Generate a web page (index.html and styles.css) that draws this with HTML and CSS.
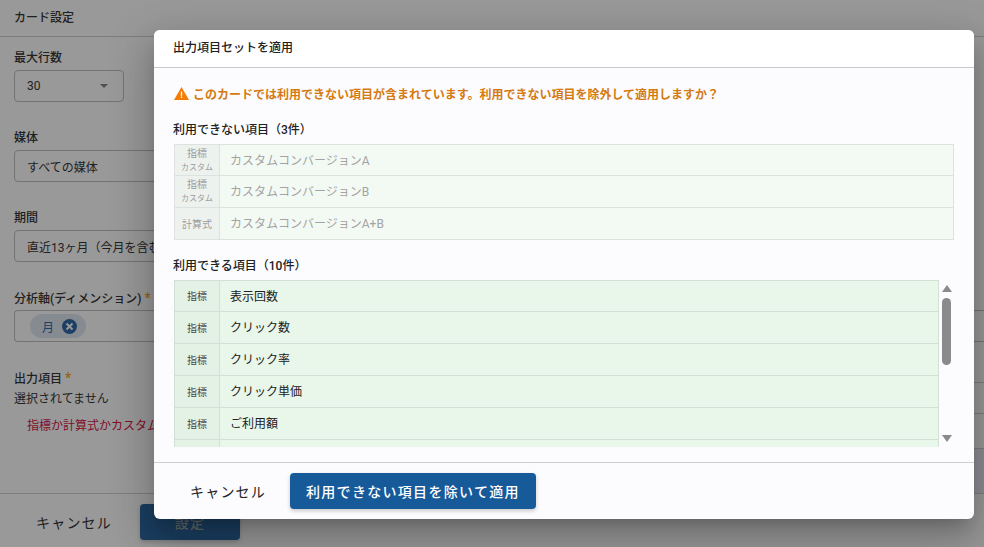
FILE: index.html
```html
<!DOCTYPE html>
<html lang="ja">
<head>
    <meta charset="UTF-8">
    <meta name="viewport" content="width=device-width, initial-scale=1.0">
    <title>カード設定</title>
    <link rel="stylesheet" href="styles.css">
</head>
<body>
    <!-- Card settings behind the dialog -->
    <div class="settings">
        <div class="settings-title">カード設定</div>
        <div class="settings-body">
            <div class="field">
                <div class="field-label">最大行数</div>
                <div class="select select-small">
                    <span>30</span>
                    <span class="caret"></span>
                </div>
            </div>
            <div class="field">
                <div class="field-label">媒体</div>
                <div class="select">すべての媒体</div>
            </div>
            <div class="field">
                <div class="field-label">期間</div>
                <div class="select">直近13ヶ月（今月を含む）</div>
            </div>
            <div class="field">
                <div class="field-label">分析軸(ディメンション)<span class="required">*</span></div>
                <div class="select select-wide">
                    <span class="chip">月
                        <svg class="chip-close" viewBox="0 0 16 16">
                            <circle cx="8" cy="8" r="8" fill="#1a5a9c"/>
                            <path d="M4.8 4.8l6.4 6.4M11.2 4.8l-6.4 6.4" stroke="#fff" stroke-width="2" fill="none"/>
                        </svg>
                    </span>
                </div>
            </div>
            <div class="output-field">
                <div class="output-left">
                    <div class="field-label">出力項目<span class="required">*</span></div>
                    <div class="output-empty">選択されてません</div>
                    <div class="output-error">指標か計算式かカスタム</div>
                </div>
                <div class="output-right">
                    <div class="side-row"></div>
                    <div class="side-row side-row-mid"></div>
                    <div class="side-row side-row-last"></div>
                </div>
            </div>
        </div>
        <div class="settings-footer">
            <button class="button-text">キャンセル</button>
            <button class="button-primary button-wide">設定</button>
        </div>
    </div>

    <div class="scrim"></div>

    <!-- Dialog -->
    <div class="dialog">
        <div class="dialog-title">出力項目セットを適用</div>
        <div class="dialog-body">
            <div class="warning">
                <svg class="warning-icon" viewBox="0 0 15 13">
                    <path d="M7.5 0L15 13H0Z" fill="#f57c00"/>
                    <path d="M6.8 4.5h1.4v4.2H6.8zM6.8 9.6h1.4v1.5H6.8z" fill="#fff"/>
                </svg>
                <span>このカードでは利用できない項目が含まれています。利用できない項目を除外して適用しますか？</span>
            </div>

            <div class="list-heading">利用できない項目（3件）</div>
            <div class="item-table item-table-disabled">
                <div class="item-row">
                    <div class="item-type">指標<small>カスタム</small></div>
                    <div class="item-name">カスタムコンバージョンA</div>
                </div>
                <div class="item-row">
                    <div class="item-type">指標<small>カスタム</small></div>
                    <div class="item-name">カスタムコンバージョンB</div>
                </div>
                <div class="item-row">
                    <div class="item-type">計算式</div>
                    <div class="item-name">カスタムコンバージョンA+B</div>
                </div>
            </div>

            <div class="list-heading">利用できる項目（10件）</div>
            <div class="scroll-box">
                <div class="item-table item-table-enabled">
                    <div class="item-row">
                        <div class="item-type">指標</div>
                        <div class="item-name">表示回数</div>
                    </div>
                    <div class="item-row">
                        <div class="item-type">指標</div>
                        <div class="item-name">クリック数</div>
                    </div>
                    <div class="item-row">
                        <div class="item-type">指標</div>
                        <div class="item-name">クリック率</div>
                    </div>
                    <div class="item-row">
                        <div class="item-type">指標</div>
                        <div class="item-name">クリック単価</div>
                    </div>
                    <div class="item-row">
                        <div class="item-type">指標</div>
                        <div class="item-name">ご利用額</div>
                    </div>
                    <div class="item-row">
                        <div class="item-type"></div>
                        <div class="item-name"></div>
                    </div>
                </div>
                <div class="scrollbar">
                    <span class="arrow-up"></span>
                    <span class="scroll-thumb"></span>
                    <span class="arrow-down"></span>
                </div>
            </div>
        </div>
        <div class="dialog-footer">
            <button class="button-text">キャンセル</button>
            <button class="button-primary">利用できない項目を除いて適用</button>
        </div>
    </div>
</body>
</html>
```

FILE: styles.css
```css
html, body {
    height: 100%;
}
body {
    margin: 0;
    overflow: hidden;
    background: #fff;
    color: #212121;
    font-family: 'Roboto', 'Noto Sans CJK JP', sans-serif;
    font-size: 12px;
}
button {
    font-family: inherit;
    border: none;
    cursor: pointer;
}

/* Settings panel */
.settings {
    height: 547px;
    display: flex;
    flex-direction: column;
}
.settings-title {
    height: 36px;
    padding-left: 14px;
    line-height: 36px;
    font-size: 12px;
    font-weight: 500;
    border-bottom: 1px solid #ccc;
}
.settings-body {
    flex: 1;
    padding: 12px 0 0 14px;
}
.field {
    height: 80px;
}
.field-label {
    height: 18px;
    line-height: 18px;
    font-size: 12px;
    font-weight: 500;
}
.required {
    color: #f59b00;
    margin-left: 3px;
    font-size: 14px;
}
.select {
    height: 30px;
    margin-top: 3px;
    width: 600px;
    padding: 0 12px;
    display: flex;
    align-items: center;
    border: 1px solid #bbb;
    border-radius: 4px;
    font-size: 12px;
}
.select-small {
    width: 84px;
    justify-content: space-between;
}
.select-wide {
    width: auto;
    border-right: none;
    border-radius: 4px 0 0 4px;
}
.caret {
    width: 0;
    height: 0;
    margin-right: 3px;
    border-left: 4px solid transparent;
    border-right: 4px solid transparent;
    border-top: 4px solid #777;
}
.chip {
    margin-left: 3px;
    height: 24px;
    width: 56px;
    padding-left: 12px;
    box-sizing: border-box;
    display: flex;
    align-items: center;
    gap: 8px;
    border-radius: 12px;
    background: #dce6f0;
    color: #1a5a9c;
    font-size: 12px;
}
.chip-close {
    width: 15px;
    height: 15px;
}
.output-field {
    display: flex;
}
.output-left {
    width: 300px;
    flex: none;
}
.output-empty {
    margin-top: 3px;
    line-height: 18px;
}
.output-error {
    margin-top: 9px;
    padding-left: 13px;
    line-height: 18px;
    color: #d00030;
    white-space: nowrap;
}
.output-right {
    flex: 1;
    margin-top: 13px;
}
.side-row {
    height: 30px;
    border-top: 1px solid #ccc;
}
.side-row-mid {
    height: 34px;
}
.side-row-last {
    height: 44px;
    background: #e9e9f6;
}
.settings-footer {
    height: 53px;
    padding-left: 20px;
    display: flex;
    align-items: flex-start;
    gap: 12px;
    border-top: 1px solid #ccc;
}
.settings-footer .button-text,
.settings-footer .button-primary {
    margin-top: 10px;
}

/* Scrim */
.scrim {
    position: absolute;
    inset: 0;
    background: rgba(33, 33, 33, 0.46);
}

/* Dialog */
.dialog {
    position: absolute;
    left: 154px;
    top: 30px;
    width: 820px;
    height: 489px;
    display: flex;
    flex-direction: column;
    background: #fcfcff;
    border-radius: 6px;
    box-shadow: 0 11px 15px -7px rgba(0, 0, 0, 0.2), 0 24px 38px 3px rgba(0, 0, 0, 0.14), 0 9px 46px 8px rgba(0, 0, 0, 0.12);
    overflow: hidden;
}
.dialog-title {
    height: 37px;
    flex: none;
    padding-left: 19px;
    line-height: 37px;
    font-size: 12px;
    font-weight: 500;
    background: #fff;
    border-bottom: 1px solid #c9c9cc;
}
.dialog-body {
    flex: 1;
    padding: 15px 20px 0 19px;
    min-height: 0;
}
.warning {
    height: 20px;
    margin-left: 1px;
    display: flex;
    align-items: center;
    gap: 4px;
    color: #d57a10;
    font-size: 12px;
    font-weight: 700;
}
.warning-icon {
    width: 15px;
    height: 13px;
}
.list-heading {
    margin-top: 16px;
    margin-bottom: 4px;
    height: 20px;
    line-height: 20px;
    font-size: 12px;
    font-weight: 500;
}
.warning + .list-heading {
    margin-top: 17px;
}
.item-table {
    margin-left: 1px;
    border: 1px solid #d3e0d5;
    border-bottom: none;
}
.item-row {
    height: 31px;
    display: flex;
    border-bottom: 1px solid #d3e0d5;
}
.item-row:first-child {
    height: 30px;
}
.item-type {
    width: 45px;
    flex: none;
    padding-top: 2px;
    box-sizing: border-box;
    display: flex;
    flex-direction: column;
    align-items: center;
    justify-content: center;
    font-size: 10px;
    line-height: 14px;
    border-right: 1px solid #d3e0d5;
}
.item-type small {
    margin-bottom: 2px;
    font-size: 8px;
    line-height: 13px;
}
.item-name {
    padding-left: 10px;
    line-height: 33px;
    font-size: 12px;
}
.item-table-disabled {
    background: #f3faf4;
    border-color: #dde2de;
}
.item-table-disabled .item-row,
.item-table-disabled .item-type {
    border-color: #dde2de;
}
.item-table-disabled .item-type {
    background: #eef2ef;
    color: #9b9b9b;
}
.item-table-disabled .item-name {
    color: #a3a3a3;
}
.item-table-enabled {
    flex: 1;
    background: #e9f6ea;
    height: 167px;
    overflow: hidden;
    box-sizing: border-box;
}
.item-table-enabled .item-type {
    background: #e4f2e5;
    color: #444;
}
.scroll-box {
    display: flex;
}
.scrollbar {
    width: 15px;
    flex: none;
    height: 167px;
    display: flex;
    flex-direction: column;
    align-items: center;
}
.arrow-up, .arrow-down {
    width: 0;
    height: 0;
    border-left: 5px solid transparent;
    border-right: 5px solid transparent;
}
.arrow-up {
    margin-top: 5px;
    border-bottom: 7px solid #8a8a8a;
}
.arrow-down {
    margin-top: auto;
    margin-bottom: 5px;
    border-top: 7px solid #8a8a8a;
}
.scroll-thumb {
    width: 9px;
    height: 67px;
    margin-top: 6px;
    border-radius: 5px;
    background: #8a8a8a;
}
.dialog-footer {
    height: 46px;
    flex: none;
    padding: 10px 0 0 20px;
    display: flex;
    align-items: flex-start;
    gap: 8px;
    border-top: 1px solid #cfcfd2;
}
.button-text {
    height: 36px;
    padding: 0 16px;
    background: transparent;
    color: #212121;
    font-size: 14px;
    letter-spacing: 1.2px;
}
.button-primary {
    height: 36px;
    padding: 0 16px;
    border-radius: 4px;
    background: #175a9a;
    color: #fff;
    font-size: 14px;
    font-weight: 500;
    letter-spacing: 1.3px;
    box-shadow: 0 2px 4px rgba(0, 0, 0, 0.2);
}
.button-wide {
    width: 100px;
    color: #9aa;
}
```
